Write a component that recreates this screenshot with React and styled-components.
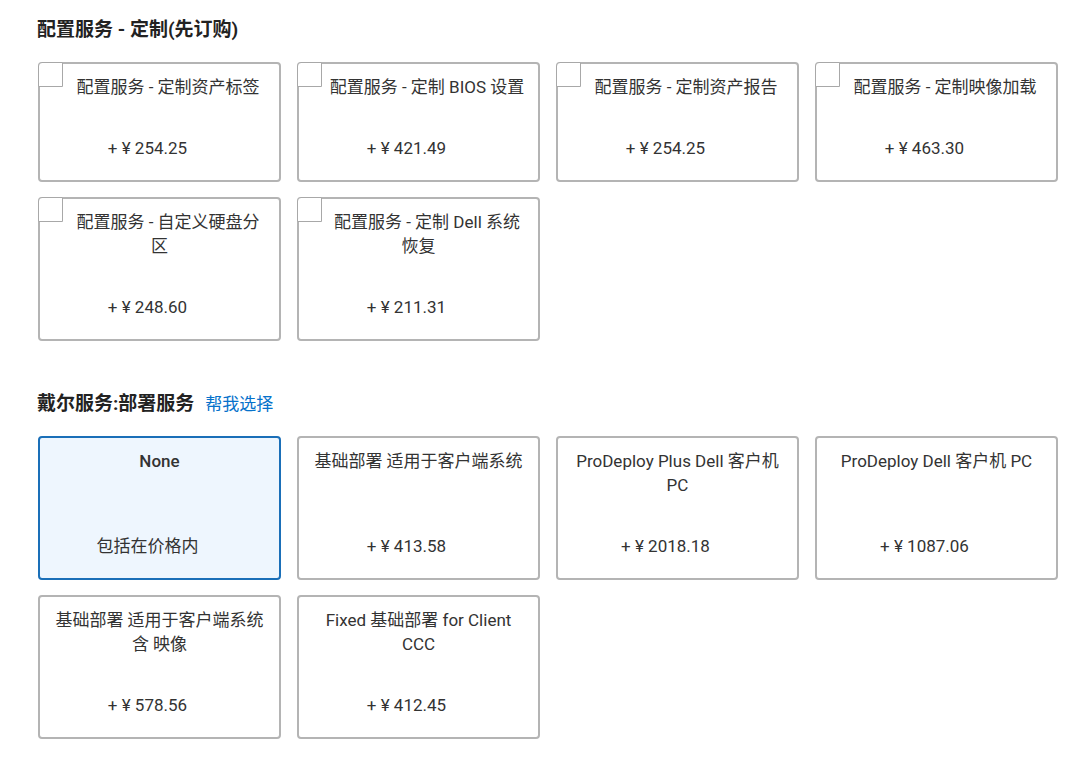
import styled, { createGlobalStyle } from "styled-components";

const GlobalStyle = createGlobalStyle`
  body {
    margin: 0;
    background: #ffffff;
    font-family: "Roboto", "Noto Sans CJK SC", sans-serif;
    color: #333333;
  }
`;

const Page = styled.div`
  padding: 16px 0 24px 37px;
  display: flex;
  flex-direction: column;
`;

const Section = styled.section`
  display: flex;
  flex-direction: column;
  margin-bottom: 49px;
`;

const HeadingRow = styled.div`
  display: flex;
  align-items: baseline;
  gap: 11px;
  height: 28px;
  margin-bottom: 18px;
`;

const Heading = styled.h2`
  margin: 0;
  font-size: 19px;
  line-height: 28px;
  font-weight: 700;
  color: #222222;
`;

const HelpLink = styled.a`
  font-size: 17px;
  color: #0672cb;
  text-decoration: none;
  cursor: pointer;
`;

const Grid = styled.div`
  display: grid;
  grid-template-columns: repeat(4, 243px);
  gap: 15px 16px;
  margin-left: 1px;
`;

const Card = styled.div`
  position: relative;
  box-sizing: border-box;
  display: flex;
  flex-direction: column;
  min-height: 120px;
  padding: 11px 12px 20px;
  border: 2px solid ${(p) => (p.$selected ? "#1a6fb8" : "#b4b4b4")};
  border-radius: 4px;
  background: ${(p) => (p.$selected ? "#eef6fe" : "#ffffff")};
  cursor: pointer;
`;

const CheckBox = styled.span`
  position: absolute;
  top: -2px;
  left: -2px;
  width: 25px;
  height: 25px;
  box-sizing: border-box;
  border: 1px solid #a8a8a8;
  border-top-left-radius: 4px;
  background: #ffffff;
`;

const Title = styled.div`
  font-size: 17px;
  line-height: 24px;
  text-align: center;
  color: #333333;
  font-weight: ${(p) => (p.$bold ? 500 : 400)};
  text-indent: ${(p) => (p.$check ? "17px" : "0")};
  margin-bottom: 37px;
`;

const Price = styled.div`
  margin-top: auto;
  font-size: 17px;
  line-height: 24px;
  text-align: center;
  padding-right: 24px;
  color: #333333;
`;

const customItems = [
  { title: "配置服务 - 定制资产标签", price: "+ ¥ 254.25" },
  { title: "配置服务 - 定制 BIOS 设置", price: "+ ¥ 421.49" },
  { title: "配置服务 - 定制资产报告", price: "+ ¥ 254.25" },
  { title: "配置服务 - 定制映像加载", price: "+ ¥ 463.30" },
  { title: "配置服务 - 自定义硬盘分区", price: "+ ¥ 248.60" },
  { title: "配置服务 - 定制 Dell 系统恢复", price: "+ ¥ 211.31" },
];

const deployItems = [
  { title: "None", price: "包括在价格内", selected: true },
  { title: "基础部署 适用于客户端系统", price: "+ ¥ 413.58" },
  { title: "ProDeploy Plus Dell 客户机 PC", price: "+ ¥ 2018.18" },
  { title: "ProDeploy Dell 客户机 PC", price: "+ ¥ 1087.06" },
  { title: "基础部署 适用于客户端系统含 映像", price: "+ ¥ 578.56" },
  { title: "Fixed 基础部署 for Client CCC", price: "+ ¥ 412.45" },
];

function App() {
  return (
    <>
      <GlobalStyle />
      <Page>
        <Section>
          <HeadingRow>
            <Heading>配置服务 - 定制(先订购)</Heading>
          </HeadingRow>
          <Grid>
            {customItems.map((item) => (
              <Card key={item.title}>
                <CheckBox />
                <Title $check>{item.title}</Title>
                <Price>{item.price}</Price>
              </Card>
            ))}
          </Grid>
        </Section>

        <Section>
          <HeadingRow>
            <Heading>戴尔服务:部署服务</Heading>
            <HelpLink>帮我选择</HelpLink>
          </HeadingRow>
          <Grid>
            {deployItems.map((item) => (
              <Card key={item.title} $selected={item.selected}>
                <Title $bold={item.selected}>{item.title}</Title>
                <Price>{item.price}</Price>
              </Card>
            ))}
          </Grid>
        </Section>
      </Page>
    </>
  );
}

export default App;
